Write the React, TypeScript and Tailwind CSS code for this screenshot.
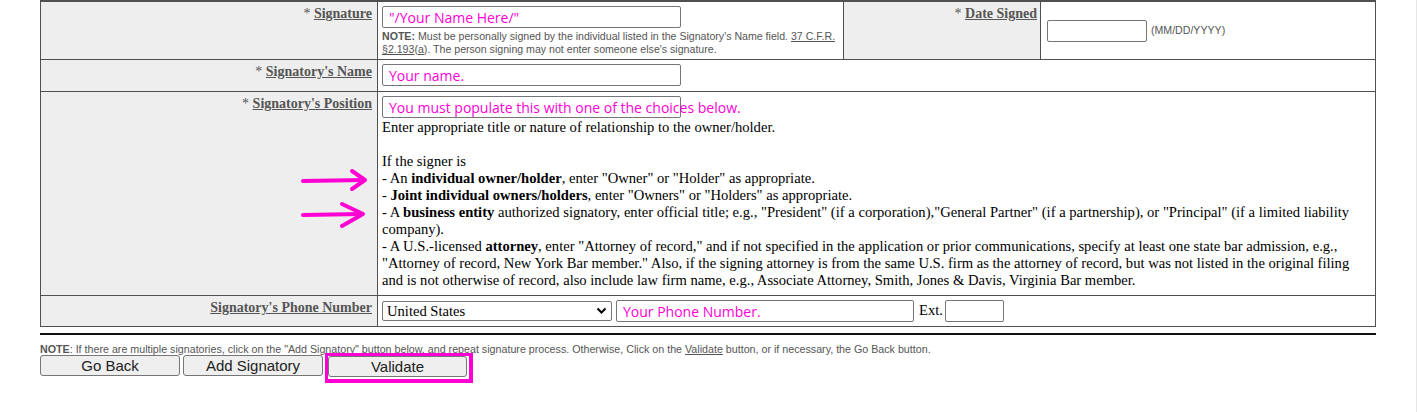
import React from "react";

const MAGENTA = "#ff00d4";

function Overlay({ text }: { text: string }) {
  // annotation typed over the field, may spill past the box
  return (
    <span
      className="pointer-events-none absolute inset-y-0 left-[7px] flex items-center whitespace-nowrap text-[14px] text-[#ff00d8]"
      style={{ fontFamily: '"Open Sans", "Noto Sans", sans-serif' }}
    >
      {text}
    </span>
  );
}

function Field({ width, text }: { width: string; text?: string }) {
  return (
    <div className={`relative block h-[22px] shrink-0 ${width}`}>
      <input
        type="text"
        className="block h-full w-full rounded-[2px] border border-[#767676] bg-white px-1 outline-none"
      />
      {text && <Overlay text={text} />}
    </div>
  );
}

function Label({ text, required = true }: { text: string; required?: boolean }) {
  return (
    <td className="w-[337px] border border-[#505050] bg-[#eeeeee] pr-[5px] pt-[3px] text-right align-top text-[14px] leading-[18px] text-[#555]">
      {required && <span>* </span>}
      <span className="font-bold underline">{text}</span>
    </td>
  );
}

export default function App() {
  const serif = { fontFamily: '"Liberation Serif", "Times New Roman", serif' };
  const small = { fontFamily: '"Liberation Sans", Arial, sans-serif' };

  return (
    <div className="relative h-[412px] w-full border-r border-[#e6e6e6] bg-white" style={serif}>
      <div className="relative ml-[40px] w-[1336px]">
        <table className="w-full table-fixed border-collapse border-t-2 border-[#505050]">
          <colgroup>
            <col className="w-[337px]" />
            <col className="w-[466px]" />
            <col className="w-[197px]" />
            <col />
          </colgroup>
          <tbody>
            <tr>
              <Label text="Signature" />
              <td className="border border-[#505050] pl-[4px] pt-[4px] pb-[3px] align-top">
                <Field width="w-[299px]" text={'"/Your Name Here/"'} />
                <div className="mt-[2px] text-[10.6px] leading-[13px] text-[#555]" style={small}>
                  <b>NOTE:</b> Must be personally signed by the individual listed in the
                  Signatory's Name field. <span className="underline">37 C.F.R. §2.193</span>(
                  <span className="underline">a</span>). The person signing may not enter someone
                  else's signature.
                </div>
              </td>
              <td className="border border-[#505050] bg-[#eeeeee] pr-[3px] pt-[3px] text-right align-top text-[14px] leading-[18px] text-[#555]">
                * <span className="font-bold underline">Date Signed</span>
              </td>
              <td className="border border-[#505050] pl-[6px] align-middle">
                <div className="flex items-center gap-[4px]">
                  <Field width="w-[100px]" />
                  <span className="text-[10.6px] text-[#555]" style={small}>
                    (MM/DD/YYYY)
                  </span>
                </div>
              </td>
            </tr>
            <tr>
              <Label text="Signatory's Name" />
              <td colSpan={3} className="border border-[#505050] pl-[4px] pt-[4px] pb-[5px] align-top">
                <Field width="w-[299px]" text="Your name." />
              </td>
            </tr>
            <tr>
              <Label text="Signatory's Position" />
              <td
                colSpan={3}
                className="border border-[#505050] pl-[4px] pr-[16px] pt-[4px] pb-[6px] align-top text-[14.6px] leading-[17px] text-black"
              >
                <Field width="w-[299px]" text="You must populate this with one of the choices below." />
                <div className="mt-[1px]">
                  Enter appropriate title or nature of relationship to the owner/holder.
                  <br />
                  <br />
                  If the signer is
                  <br />- An <b>individual owner/holder</b>, enter "Owner" or "Holder" as appropriate.
                  <br />- <b>Joint individual owners/holders</b>, enter "Owners" or "Holders" as
                  appropriate.
                  <br />- A <b>business entity</b> authorized signatory, enter official title; e.g.,
                  "President" (if a corporation),"General Partner" (if a partnership), or "Principal"
                  (if a limited liability company).
                  <br />- A U.S.-licensed <b>attorney</b>, enter "Attorney of record," and if not
                  specified in the application or prior communications, specify at least one state bar
                  admission, e.g., "Attorney of record, New York Bar member." Also, if the signing
                  attorney is from the same U.S. firm as the attorney of record, but was not listed in
                  the original filing and is not otherwise of record, also include law firm name, e.g.,
                  Associate Attorney, Smith, Jones &amp; Davis, Virginia Bar member.
                </div>
              </td>
            </tr>
            <tr>
              <Label text="Signatory's Phone Number" required={false} />
              <td colSpan={3} className="border border-[#505050] pl-[4px] pt-[4px] pb-[4px] align-middle">
                <div className="flex h-[22px] items-center gap-[4px]">
                  <div className="relative h-[20px] w-[230px] shrink-0">
                    <select
                      className="block h-full w-full appearance-none rounded-[2px] border border-[#767676] bg-white pl-[4px] text-[14.6px] leading-[18px] text-black outline-none"
                      style={serif}
                      defaultValue="US"
                    >
                      <option value="US">United States</option>
                    </select>
                    <svg
                      className="pointer-events-none absolute right-[5px] top-[6px]"
                      width="11"
                      height="8"
                      viewBox="0 0 11 8"
                    >
                      <path d="M1.5 1.5 L5.5 5.5 L9.5 1.5" fill="none" stroke="#000" strokeWidth="2" />
                    </svg>
                  </div>
                  <Field width="w-[298px]" text="Your Phone Number." />
                  <span className="ml-[1px] text-[14.6px] text-black">Ext.</span>
                  <div className="-ml-[2px]">
                    <Field width="w-[59px]" />
                  </div>
                </div>
              </td>
            </tr>
          </tbody>
        </table>

        {/* hand-drawn arrows */}
        <svg
          className="pointer-events-none absolute left-[256px] top-[164px]"
          width="76"
          height="68"
          viewBox="0 0 76 68"
        >
          <g fill="none" stroke={MAGENTA} strokeWidth="4" strokeLinecap="round" strokeLinejoin="round">
            <path d="M7 17 L68 16" />
            <path d="M56 7 L69 16 L56 25" />
            <path d="M7 51 L66 50" />
            <path d="M46 40 L67 50 L46 62" />
          </g>
        </svg>

        <div className="mt-[6px] h-[2px] bg-[#111]" />

        <div className="mt-[8px] text-[10.7px] leading-[13px] text-[#555]" style={small}>
          <b>NOTE</b>: If there are multiple signatories, click on the "Add Signatory" button below, and
          repeat signature process. Otherwise, Click on the <span className="underline">Validate</span>{" "}
          button, or if necessary, the Go Back button.
        </div>

        <div className="-mt-[1px] flex gap-[3px]" style={small}>
          <button className="h-[21px] w-[140px] rounded-[3px] border border-[#767676] bg-[#efefef] text-[15px] leading-[19px] text-[#222]">
            Go Back
          </button>
          <button className="h-[21px] w-[140px] rounded-[3px] border border-[#767676] bg-[#efefef] text-[15px] leading-[19px] text-[#222]">
            Add Signatory
          </button>
          <span className="relative ml-[2px]">
            <button className="h-[21px] w-[139px] rounded-[3px] border border-[#767676] bg-[#efefef] text-[15px] leading-[19px] text-[#222]">
              Validate
            </button>
            <span className="pointer-events-none absolute -bottom-[4px] -left-[3px] -right-[6px] -top-[2px] border-[3px] border-b-4 border-r-4 border-[#ff00d4]" />
          </span>
        </div>
      </div>
    </div>
  );
}
